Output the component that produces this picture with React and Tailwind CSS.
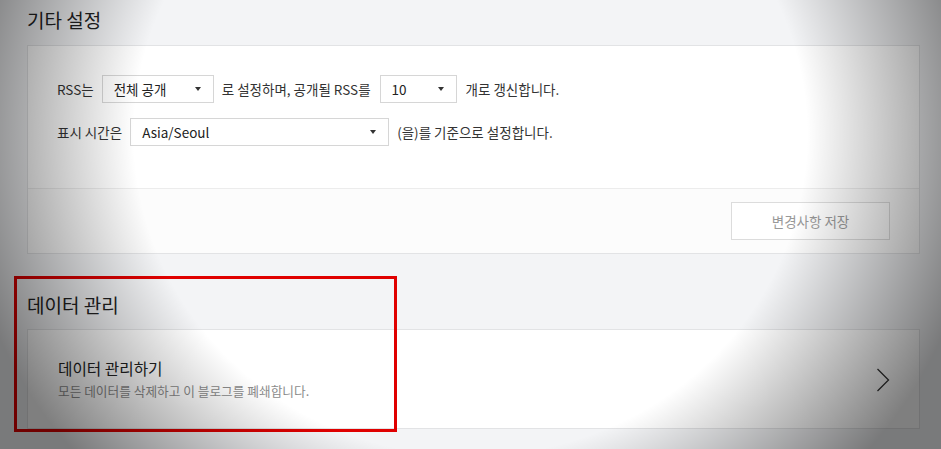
function Caret() {
  return <span className="ml-auto h-0 w-0 border-x-[3.5px] border-t-[4px] border-x-transparent border-t-[#333]" />
}

function SelectBox({ value, className }) {
  return (
    <div className={`flex h-[28px] items-center border border-[#d6d6d6] bg-white pl-[11px] pr-[12px] text-[13.5px] text-[#222] ${className}`}>
      <span>{value}</span>
      <Caret />
    </div>
  )
}

export default function App() {
  return (
    <div
      className="relative h-[449px] w-[941px] overflow-hidden bg-[#f3f4f6] pl-[27px] pr-[21px] text-[#333]"
      style={{ fontFamily: '"Noto Sans CJK KR", "Noto Sans", sans-serif' }}
    >
      <h2 className="pt-[5px] text-[19px] leading-[30px] text-[#222]">기타 설정</h2>

      <div className="mt-[10px] border border-[#e2e3e5] bg-white">
        <div className="flex flex-col gap-[15px] px-[29px] pt-[29px] pb-[42px] text-[13.5px]">
          <div className="flex items-center">
            <span>RSS는</span>
            <SelectBox value="전체 공개" className="ml-[8px] w-[112px]" />
            <span className="ml-[8px]">로 설정하며, 공개될 RSS를</span>
            <SelectBox value="10" className="ml-[9px] w-[77px]" />
            <span className="ml-[9px]">개로 갱신합니다.</span>
          </div>
          <div className="flex items-center">
            <span>표시 시간은</span>
            <SelectBox value="Asia/Seoul" className="ml-[8px] w-[259px]" />
            <span className="ml-[8px]">(을)를 기준으로 설정합니다.</span>
          </div>
        </div>
        <div className="flex justify-end border-t border-[#ececec] bg-[#fcfcfc] pt-[13px] pr-[29px] pb-[13px]">
          <button className="h-[38px] w-[159px] border border-[#dcdcdc] bg-white text-[13.5px] text-[#999]">
            변경사항 저장
          </button>
        </div>
      </div>

      <h2 className="mt-[36px] text-[19px] leading-[30px] text-[#222]">데이터 관리</h2>

      <div className="mt-[9px] flex h-[100px] items-center justify-between border border-[#e2e3e5] bg-white pl-[30px] pr-[29px]">
        <div className="flex flex-col">
          <span className="text-[15.7px] leading-[22px] text-[#222]">데이터 관리하기</span>
          <span className="mt-[2px] text-[12.7px] leading-[18px] text-[#8c8c8c]">모든 데이터를 삭제하고 이 블로그를 폐쇄합니다.</span>
        </div>
        <svg width="14" height="24" viewBox="0 0 14 24" fill="none" className="mt-[2px]">
          <polyline points="1.5,1 12.5,12 1.5,23" stroke="#333" strokeWidth="1.3" />
        </svg>
      </div>

      {/* annotation box */}
      <div className="pointer-events-none absolute top-[276px] left-[14px] h-[156px] w-[383px] border-[3px] border-[#e00000]" />

      {/* vignette */}
      <div className="pointer-events-none absolute inset-0 bg-[radial-gradient(ellipse_55%_110%_at_50%_30%,transparent_65%,rgba(0,0,0,0.5)_100%)]" />
    </div>
  )
}
